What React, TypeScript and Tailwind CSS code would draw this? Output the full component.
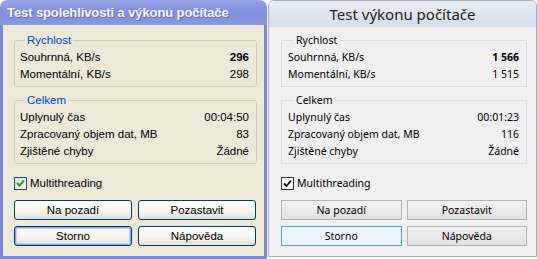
import React from "react";

type Row = { label: string; value: string; bold?: boolean };

function GroupXP({ label, rows }: { label: string; rows: Row[] }) {
  return (
    <fieldset className="border border-[#d0d0bf] rounded-[3px] px-[5px] pt-[2px] pb-[3px] mr-[1px]">
      <legend className="ml-[5px] px-[2px] leading-[14px] text-[#0046d5]">{label}</legend>
      {rows.map((r) => (
        <div key={r.label} className="flex justify-between h-[17px] leading-[17px] pr-[2px]">
          <span>{r.label}</span>
          <span className={r.bold ? "font-bold" : ""}>{r.value}</span>
        </div>
      ))}
    </fieldset>
  );
}

function Group7({ label, rows }: { label: string; rows: Row[] }) {
  return (
    <fieldset className="border border-[#d5dfe5] px-[6px] pt-[2px] pb-[3px]">
      <legend className="ml-[6px] px-[2px] leading-[14px] text-black">{label}</legend>
      {rows.map((r) => (
        <div key={r.label} className="flex justify-between h-[17px] leading-[17px] pr-[1px]">
          <span>{r.label}</span>
          <span className={r.bold ? "font-bold" : ""}>{r.value}</span>
        </div>
      ))}
    </fieldset>
  );
}

function BtnXP({ label, def }: { label: string; def?: boolean }) {
  return (
    <button
      className={
        "h-[20px] border border-[#003c74] rounded-[3px] bg-[linear-gradient(180deg,#ffffff_0%,#f5f4ef_55%,#e3e0d6_100%)] text-black leading-[18px] " +
        (def ? "shadow-[inset_0_0_0_1px_#8aa6ee,inset_0_0_0_2px_#c4d3f8]" : "")
      }
    >
      {label}
    </button>
  );
}

function Btn7({ label, def }: { label: string; def?: boolean }) {
  return (
    <button
      className={
        "h-[20px] border text-black leading-[18px] " +
        (def
          ? "border-[#5a9fdc] bg-[#edf4fb]"
          : "border-[#b4b4b4] bg-[linear-gradient(180deg,#f3f3f3_0%,#e9e9e9_50%,#e1e1e1_100%)]")
      }
    >
      {label}
    </button>
  );
}

export default function App() {
  return (
    <div className="w-[537px] h-[259px] flex bg-white overflow-hidden">
      {/* XP window */}
      <div className="w-[267px] h-[259px] flex flex-col font-['Liberation_Sans',Arial,sans-serif] text-[11.5px] text-black">
        <div className="h-[25px] shrink-0 rounded-t-[7px] bg-[linear-gradient(180deg,#9aa8ea_0%,#8595e0_30%,#7f90de_70%,#8a9be2_100%)] flex items-center pl-[7px]">
          <span className="text-[13px] font-bold text-[#f6f8ff] tracking-[-0.1px] [text-shadow:1px_1px_0_#6070c0]">
            Test spolehlivosti a výkonu počítače
          </span>
        </div>
        <div className="flex-1 border-x-[3px] border-b-[3px] border-[#7c88d6] bg-[#ece9d8] pl-[11px] pr-[6px] pt-[8px] flex flex-col">
          <GroupXP
            label="Rychlost"
            rows={[
              { label: "Souhrnná, KB/s", value: "296", bold: true },
              { label: "Momentální, KB/s", value: "298" },
            ]}
          />
          <div className="h-[6px]" />
          <GroupXP
            label="Celkem"
            rows={[
              { label: "Uplynulý čas", value: "00:04:50" },
              { label: "Zpracovaný objem dat, MB", value: "83" },
              { label: "Zjištěné chyby", value: "Žádné" },
            ]}
          />
          <div className="flex items-center gap-[3px] mt-[13px] h-[13px]">
            <div className="w-[13px] h-[13px] border border-[#1c5180] bg-[linear-gradient(135deg,#dcdcd7_0%,#ffffff_100%)] flex items-center justify-center">
              <svg width="9" height="9" viewBox="0 0 9 9">
                <path d="M1 4 L3.5 6.5 L8 1.5" stroke="#21a121" strokeWidth="2" fill="none" />
              </svg>
            </div>
            <span>Multithreading</span>
          </div>
          <div className="grid grid-cols-2 gap-x-[6px] gap-y-[6px] mt-[10px] mr-[2px]">
            <BtnXP label="Na pozadí" />
            <BtnXP label="Pozastavit" />
            <BtnXP label="Storno" def />
            <BtnXP label="Nápověda" />
          </div>
        </div>
      </div>

      {/* Win7 window */}
      <div className="flex-1 h-[257px] flex flex-col border border-[#a3aebf] rounded-t-[6px] ml-[1px] overflow-hidden font-['Noto_Sans',sans-serif] text-[10.5px] text-black bg-[#f0f0f0]">
        <div className="h-[26px] shrink-0 bg-[linear-gradient(180deg,#e9eef4_0%,#dde5ee_50%,#d3dde9_100%)] flex items-center justify-center">
          <span className="text-[15px] text-[#1e1e1e] leading-[20px]">Test výkonu počítače</span>
        </div>
        <div className="flex-1 pl-[12px] pr-[9px] pt-[6px] flex flex-col">
          <Group7
            label="Rychlost"
            rows={[
              { label: "Souhrnná, KB/s", value: "1 566", bold: true },
              { label: "Momentální, KB/s", value: "1 515" },
            ]}
          />
          <div className="h-[6px]" />
          <Group7
            label="Celkem"
            rows={[
              { label: "Uplynulý čas", value: "00:01:23" },
              { label: "Zpracovaný objem dat, MB", value: "116" },
              { label: "Zjištěné chyby", value: "Žádné" },
            ]}
          />
          <div className="flex items-center gap-[3px] mt-[13px] h-[13px]">
            <div className="w-[13px] h-[13px] border border-[#333333] bg-white flex items-center justify-center">
              <svg width="9" height="9" viewBox="0 0 9 9">
                <path d="M1 4.5 L3.5 7 L8 1.5" stroke="#000" strokeWidth="1.8" fill="none" />
              </svg>
            </div>
            <span>Multithreading</span>
          </div>
          <div className="grid grid-cols-2 gap-x-[5px] gap-y-[6px] mt-[10px]">
            <Btn7 label="Na pozadí" />
            <Btn7 label="Pozastavit" />
            <Btn7 label="Storno" def />
            <Btn7 label="Nápověda" />
          </div>
        </div>
      </div>
    </div>
  );
}
